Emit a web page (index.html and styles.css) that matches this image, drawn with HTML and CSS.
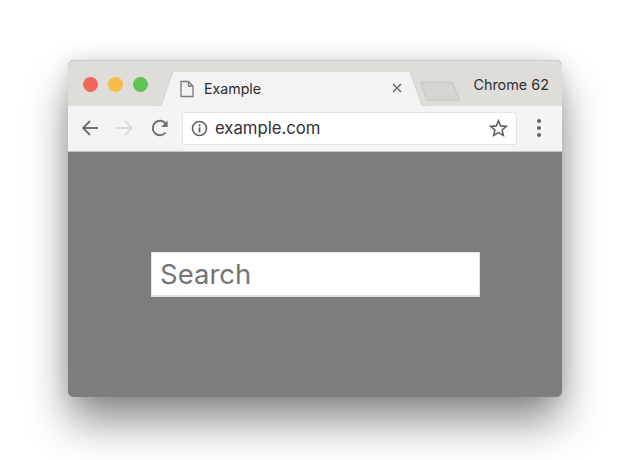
FILE: index.html
```html
<!DOCTYPE html>
<html lang="en">
<head>
<meta charset="utf-8">
<title>Example</title>
<link rel="stylesheet" href="styles.css">
</head>
<body>
<div class="window">
  <div class="tabstrip">
    <div class="lights">
      <span class="light red"></span>
      <span class="light yellow"></span>
      <span class="light green"></span>
    </div>
    <div class="tab">
      <svg class="tab-shape" width="270" height="35" viewBox="0 0 270 35"><path d="M0 35 L2 35 Q4 35 5 32 L15 3 Q16 0 19 0 L250 0 Q253 0 254 3 L264 32 Q265 35 268 35 L270 35" fill="#f3f3f3" stroke="#d2d1cf" stroke-width="1"/></svg>
      <svg class="page-icon" width="14" height="18" viewBox="0 0 14 18"><path d="M1 1.5 L8.5 1.5 L13 6 L13 16.5 L1 16.5 Z M8.5 1.5 L8.5 6 L13 6" fill="none" stroke="#7a7a7a" stroke-width="1.3"/></svg>
      <span class="tab-title">Example</span>
      <svg class="tab-close" width="10" height="10" viewBox="0 0 10 10"><path d="M1 1 L9 9 M9 1 L1 9" stroke="#5f6062" stroke-width="1.3" fill="none"/></svg>
    </div>
    <svg class="new-tab" width="40" height="20" viewBox="0 0 42 21"><path d="M2.5 1 L32 1 Q33.5 1 34.2 2.5 L41 18 Q41.5 20 39.5 20 L9 20 Q7.5 20 6.8 18.5 L1 3 Q.5 1 2.5 1 Z" fill="#d6d5d2" stroke="#c4c3c0" stroke-width="1"/></svg>
    <span class="profile">Chrome 62</span>
  </div>
  <div class="toolbar">
    <svg class="tool" width="20" height="20" viewBox="0 0 20 20"><path d="M18 10 L3.5 10 M10 3 L3 10 L10 17" fill="none" stroke="#6d6e70" stroke-width="1.8"/></svg>
    <svg class="tool" width="20" height="20" viewBox="0 0 20 20"><path d="M2 10 L16.5 10 M10 3 L17 10 L10 17" fill="none" stroke="#d8d8d8" stroke-width="1.8"/></svg>
    <svg class="tool" width="20" height="20" viewBox="0 0 20 20"><path d="M15.6 14.5 A7.2 7.2 0 1 1 15.8 5.8" fill="none" stroke="#6d6e70" stroke-width="2"/><path d="M17.6 2.6 L17.6 9 L11.2 9 Z" fill="#6d6e70"/></svg>
    <div class="omnibox">
      <svg class="info" width="17" height="17" viewBox="0 0 17 17"><circle cx="8.5" cy="8.5" r="7" fill="none" stroke="#5f6062" stroke-width="1.6"/><rect x="7.6" y="7.4" width="1.8" height="5" fill="#5f6062"/><rect x="7.6" y="4.4" width="1.8" height="1.9" fill="#5f6062"/></svg>
      <span class="url">example.com</span>
      <svg class="star" width="19" height="18" viewBox="0 0 19 18"><path d="M9.5 1.8 L11.7 6.9 L17.3 7.4 L13.1 11 L14.3 16.4 L9.5 13.6 L4.7 16.4 L5.9 11 L1.7 7.4 L7.3 6.9 Z" fill="none" stroke="#5f6062" stroke-width="1.6"/></svg>
    </div>
    <div class="menu"><span class="dot"></span><span class="dot"></span><span class="dot"></span></div>
  </div>
  <div class="content">
    <input class="search" type="text" placeholder="Search">
  </div>
</div>
</body>
</html>
```
FILE: styles.css
```css
* { box-sizing: border-box; }
html, body { margin: 0; height: 100%; background: #fff; overflow: hidden; }
body { padding: 60px 65px 0 68px; font-family: Inter, "Liberation Sans", sans-serif; }

.window {
  width: 494px;
  height: 337px;
  border-radius: 6px;
  background: #7d7d80;
  box-shadow: 0 26px 44px -2px rgba(0, 0, 0, .46), 0 0 20px rgba(0, 0, 0, .12);
  display: flex;
  flex-direction: column;
}

.tabstrip {
  position: relative;
  height: 46px;
  background: #dfddd9;
  border-radius: 6px 6px 0 0;
  border-top: 1px solid #d0cfcc;
  display: flex;
  align-items: flex-start;
  padding-left: 14.5px;
  flex: none;
}
.lights { display: flex; gap: 10px; margin-top: 15.5px; }
.light { width: 15px; height: 15px; border-radius: 50%; }
.red { background: #f2675b; }
.yellow { background: #f7bb45; }
.green { background: #5fc454; }

.tab {
  position: absolute;
  left: 89px;
  top: 10px;
  width: 270px;
  height: 35px;
  display: flex;
  align-items: center;
}
.tab-shape { position: absolute; left: 0; top: 0; }
.page-icon { position: relative; margin-left: 23px; flex: none; }
.tab-title { position: relative; margin-left: 10px; font-size: 14.2px; color: #2c2c2e; }
.tab-close { position: absolute; right: 25px; top: 12px; }

.new-tab { position: absolute; left: 352px; top: 20px; }
.profile { position: absolute; right: 13px; top: 15px; font-size: 14.4px; color: #2f2f31; }

.toolbar {
  height: 45px;
  flex: none;
  background: #f4f4f4;
  display: flex;
  align-items: center;
  padding: 0 20px 1px 12px;
}
.tool { flex: none; margin-right: 15px; }
.omnibox {
  width: 335px;
  height: 33px;
  margin-left: -3px;
  background: #fff;
  border: 1px solid #e3e3e3;
  border-radius: 3px;
  display: flex;
  align-items: center;
  padding: 0 8px 0 8px;
}
.info { flex: none; }
.url { margin-left: 7px; font-size: 16.7px; color: #303033; flex: 1; }
.star { flex: none; }
.menu {
  margin-left: auto;
  width: 6px;
  display: flex;
  flex-direction: column;
  gap: 2.6px;
  align-items: center;
}
.dot { width: 4px; height: 4px; border-radius: 50%; background: #5f6062; }

.content {
  flex: 1;
  background: #7d7d80;
  border-top: 1px solid #c4c4c4;
  border-radius: 0 0 6px 6px;
  display: flex;
  padding: 100px 0 0 83px;
  align-items: flex-start;
}
.search {
  width: 329px;
  height: 45px;
  border: 1px solid #e2e2dc;
  border-bottom-width: 2px;
  border-radius: 0;
  background: #fff;
  padding: 0 8px 1px;
  font-family: Inter, "Liberation Sans", sans-serif;
  font-size: 27.5px;
  outline: none;
}
.search::placeholder { color: #757575; opacity: 1; }
```
